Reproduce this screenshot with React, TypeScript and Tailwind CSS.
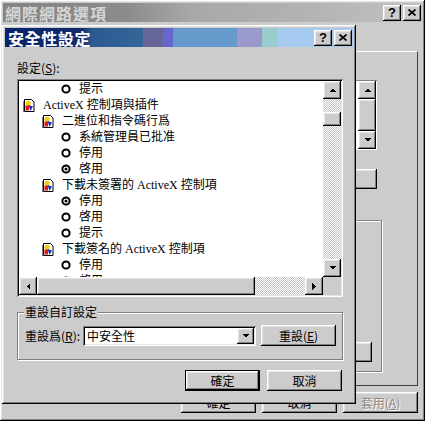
import React from 'react';

const face = 'bg-[#cccccc]';
const raised =
  'shadow-[inset_-1px_-1px_#000,inset_1px_1px_#fff,inset_-2px_-2px_#808080,inset_2px_2px_#e4e4e4]';
const sunken =
  'shadow-[inset_1px_1px_#808080,inset_-1px_-1px_#fff,inset_2px_2px_#000,inset_-2px_-2px_#e4e4e4]';
const checker =
  'bg-[repeating-conic-gradient(#c4c4c4_0%_25%,#ffffff_0%_50%)] bg-[length:2px_2px]';
const cjk = "font-['Noto_Sans_CJK_TC',sans-serif]";

type Dir = 'up' | 'down' | 'left' | 'right';

function Arrow({ dir }: { dir: Dir }) {
  if (dir === 'up' || dir === 'down') {
    return (
      <svg width="7" height="4" viewBox="0 0 7 4" shapeRendering="crispEdges">
        <polygon points={dir === 'up' ? '0,4 7,4 3.5,0.5' : '0,0 7,0 3.5,3.5'} fill="#000" />
      </svg>
    );
  }
  return (
    <svg width="4" height="7" viewBox="0 0 4 7" shapeRendering="crispEdges">
      <polygon points={dir === 'left' ? '4,0 4,7 0.5,3.5' : '0,0 0,7 3.5,3.5'} fill="#000" />
    </svg>
  );
}

function ScrollBtn({ dir }: { dir: Dir }) {
  return (
    <div className={`w-[18px] h-[18px] shrink-0 flex items-center justify-center ${face} ${raised}`}>
      <Arrow dir={dir} />
    </div>
  );
}

function TreeIcon() {
  return (
    <svg width="12" height="13" viewBox="0 0 12 13" className="shrink-0">
      <path d="M1.5 0.5h7l2.5 2.5v9.5h-9.5z" fill="#fff" stroke="#000" />
      <rect x="0" y="2" width="1" height="11" fill="#808080" />
      <circle cx="5.2" cy="4.4" r="2.6" fill="#f2d200" />
      <path d="M2.5 6.5h3.5v5h-3.5z" fill="#e01818" />
      <path d="M5.5 6l4.5 1.5-2.5 4.5z" fill="#1c2cc4" />
    </svg>
  );
}

function Radio({ checked }: { checked?: boolean }) {
  return (
    <svg width="10" height="10" viewBox="0 0 10 10" className="shrink-0">
      <circle cx="5" cy="5" r="3.6" fill="#fff" stroke="#000" strokeWidth="2" />
      {checked && <circle cx="5" cy="5" r="1.5" fill="#000" />}
    </svg>
  );
}

type Row = { kind: 'radio' | 'group' | 'sub'; text: string; checked?: boolean };

const rows: Row[] = [
  { kind: 'radio', text: '提示' },
  { kind: 'group', text: 'ActiveX 控制項與插件' },
  { kind: 'sub', text: '二進位和指令碼行爲' },
  { kind: 'radio', text: '系統管理員已批准' },
  { kind: 'radio', text: '停用' },
  { kind: 'radio', text: '啓用', checked: true },
  { kind: 'sub', text: '下載未簽署的 ActiveX 控制項' },
  { kind: 'radio', text: '停用', checked: true },
  { kind: 'radio', text: '啓用' },
  { kind: 'radio', text: '提示' },
  { kind: 'sub', text: '下載簽名的 ActiveX 控制項' },
  { kind: 'radio', text: '停用' },
  { kind: 'radio', text: '啓用' },
];

const indent: Record<Row['kind'], string> = {
  group: 'pl-[4px] gap-[8px]',
  sub: 'pl-[23px] gap-[8px]',
  radio: 'pl-[42px] gap-[8px]',
};

function CaptionButtons() {
  return (
    <div className="flex gap-[2px]">
      <div className={`w-[18px] h-[16px] flex items-center justify-center ${face} ${raised}`}>
        <span className="text-[13px] font-bold leading-none text-black font-['Liberation_Sans',sans-serif] -mt-[1px]">?</span>
      </div>
      <div className={`w-[18px] h-[16px] flex items-center justify-center ${face} ${raised}`}>
        <svg width="8" height="7" viewBox="0 0 8 7">
          <path d="M0.5 0.5l7 6M7.5 0.5l-7 6" stroke="#000" strokeWidth="1.7" />
        </svg>
      </div>
    </div>
  );
}

function ScrollDrop() {
  return (
    <div className={`w-[17px] h-[16px] flex items-center justify-center ${face} ${raised}`}>
      <Arrow dir="down" />
    </div>
  );
}

function SecurityDialog() {
  return (
    <div
      className={`absolute left-[2px] top-[25px] w-[354px] h-[379px] p-[3px] flex flex-col ${face} ${raised} ${cjk} text-[12px] text-black`}
    >
      <div className="h-[19px] shrink-0 flex items-center justify-between pl-[3px] pr-[1px] bg-[linear-gradient(90deg,#0a246a_0%,#102a6c_22%,#2c5a90_25%,#336699_39.7%,#666699_39.7%,#666699_45.4%,#6666cc_45.4%,#6666cc_48.3%,#6699cc_48.3%,#6699cc_66.7%,#9999cc_66.7%,#9999cc_73.9%,#99cccc_73.9%,#99cccc_78.4%,#a6caf0_78.4%)]">
        <span className="text-white font-bold text-[16px] leading-none tracking-[0.6px]">安全性設定</span>
        <CaptionButtons />
      </div>

      <div className="mt-[13px] ml-[12px] h-[16px] leading-[16px]">
        設定(<span className="underline">S</span>):
      </div>

      <div className={`mt-[3px] ml-[12px] w-[326px] h-[218px] p-[2px] bg-white flex flex-col ${sunken}`}>
        <div className="flex flex-1 min-h-0">
          <div className="flex-1 overflow-hidden font-['Liberation_Serif','Noto_Sans_CJK_TC',serif]">
            {rows.map((r, i) => (
              <div key={i} className={`h-[16px] flex items-center whitespace-nowrap ${indent[r.kind]}`}>
                {r.kind === 'radio' ? <Radio checked={r.checked} /> : <TreeIcon />}
                <span className="leading-[16px]">{r.text}</span>
              </div>
            ))}
          </div>
          <div className="w-[18px] flex flex-col">
            <ScrollBtn dir="up" />
            <div className={`flex-1 flex flex-col ${checker}`}>
              <div className={`mt-[13px] h-[14px] ${face} ${raised}`} />
            </div>
            <ScrollBtn dir="down" />
          </div>
        </div>
        <div className="h-[18px] flex">
          <ScrollBtn dir="left" />
          <div className={`flex-1 flex ${checker}`}>
            <div className={`w-[218px] h-full ${face} ${raised}`} />
          </div>
          <ScrollBtn dir="right" />
          <div className={`w-[18px] h-[18px] ${face}`} />
        </div>
      </div>

      <div className="relative mt-[15px] ml-[12px] w-[326px] h-[48px] border border-[#808080] shadow-[inset_1px_1px_#fff,1px_1px_#fff]">
        <span className={`absolute -top-[9px] left-[6px] px-[1px] leading-[16px] ${face}`}>重設自訂設定</span>
        <div className="flex items-center pt-[12px] pl-[7px]">
          <span className="w-[58px] leading-[16px]">
            重設爲(<span className="underline">R</span>):
          </span>
          <div className={`w-[173px] h-[20px] p-[2px] bg-white flex items-center ${sunken}`}>
            <span className="flex-1 pl-[2px] leading-[16px]">中安全性</span>
            <ScrollDrop />
          </div>
          <button className={`ml-[5px] w-[75px] h-[21px] flex items-center justify-center ${face} ${raised}`}>
            重設(<span className="underline">E</span>)
          </button>
        </div>
      </div>

      <div className="mt-[10px] flex justify-end gap-[7px] pr-[11px]">
        <button className={`w-[75px] h-[21px] border border-black flex items-center justify-center ${face} ${raised}`}>
          確定
        </button>
        <button className={`w-[75px] h-[21px] flex items-center justify-center ${face} ${raised}`}>取消</button>
      </div>
    </div>
  );
}

export default function App() {
  return (
    <div className={`relative w-[425px] h-[421px] p-[3px] flex flex-col ${face} ${raised} ${cjk} text-[12px] text-black`}>
      <div className="h-[19px] shrink-0 flex items-center justify-between pl-[2px] pr-[1px] bg-[linear-gradient(90deg,#848484_0%,#8c8c8c_30%,#a8a8a8_45%,#b4b4b4_75%,#c2c2c2_100%)]">
        <span className="text-[#d6d6d6] font-bold text-[16px] leading-none tracking-[1px]">網際網路選項</span>
        <CaptionButtons />
      </div>

      <div className="ml-[5px] mt-[29px] w-[410px] h-[335px] border-t border-t-white border-r border-r-[#404040] border-b border-b-[#404040] flex flex-col items-end">
        <div className="mt-[28px] mr-[40px] w-[340px] h-[70px] p-[1px] bg-white flex justify-end shadow-[inset_1px_1px_#808080,inset_-1px_-1px_#fff]">
          <div className="w-[18px] flex flex-col">
            <ScrollBtn dir="up" />
            <div className={`flex-1 ${face} ${raised}`} />
            <ScrollBtn dir="down" />
          </div>
        </div>
        <div className={`mt-[19px] mr-[40px] w-[100px] h-[20px] ${face} ${raised}`} />
        <div className="mt-[31px] mr-[35px] w-[360px] h-[152px] border border-[#808080] shadow-[inset_1px_1px_#fff,1px_1px_#fff] flex flex-col justify-end items-end pb-[9px] pr-[9px]">
          <div className={`w-[80px] h-[20px] ${face} ${raised}`} />
        </div>
      </div>

      <div className="mt-[6px] flex justify-end gap-[6px] pr-[4px]">
        <button className={`w-[75px] h-[21px] flex items-center justify-center ${face} ${raised}`}>確定</button>
        <button className={`w-[75px] h-[21px] flex items-center justify-center ${face} ${raised}`}>取消</button>
        <button
          className={`w-[75px] h-[21px] flex items-center justify-center text-[#8a8a8a] [text-shadow:1px_1px_0_#fff] ${face} ${raised}`}
        >
          套用(<span className="underline">A</span>)
        </button>
      </div>

      <SecurityDialog />
    </div>
  );
}
